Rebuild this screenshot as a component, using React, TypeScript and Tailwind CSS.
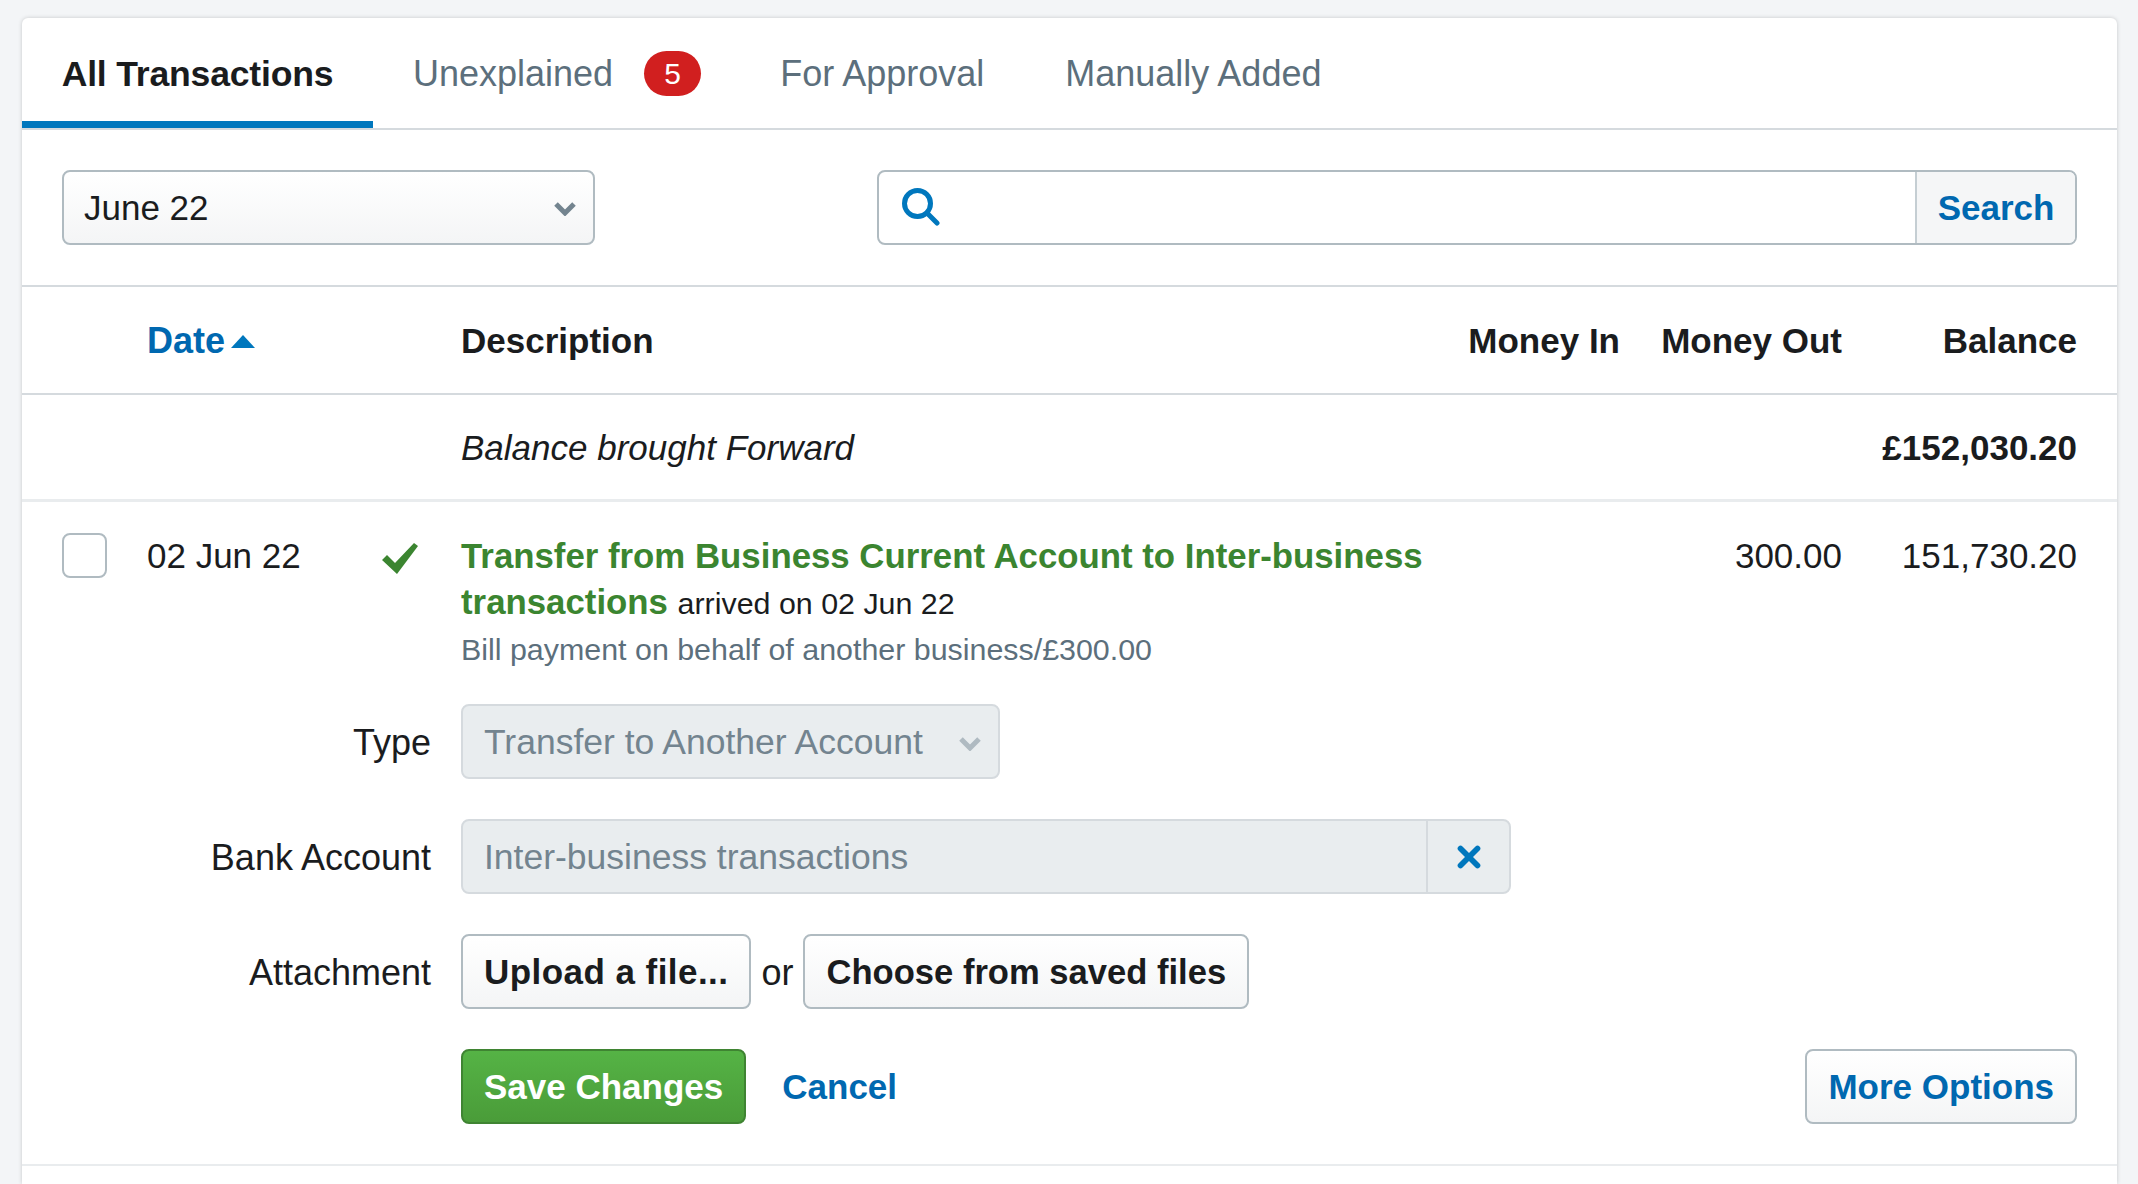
import { X } from 'lucide-react';

const font = { fontFamily: '"Liberation Sans", Arial, sans-serif' };

function Chevron({ className }: { className: string }) {
  return (
    <svg viewBox="0 0 24 16" className={className} aria-hidden>
      <path d="M3 4 L12 13 L21 4" fill="none" stroke="currentColor" strokeWidth="5" />
    </svg>
  );
}

function Tabs() {
  return (
    <div className="flex h-[112px] border-b-2 border-[#d5dade] text-[36px] text-[#5c6f7c]">
      <div className="flex h-[110px] w-[351px] items-center justify-center border-b-[7px] border-[#0077bd] pt-[10px] text-[35.6px] font-bold tracking-[-0.2px] text-[#1a1c1e]">
        All Transactions
      </div>
      <div className="ml-[40px] flex items-center pt-[1px]">
        Unexplained
        <span className="ml-[31px] flex h-[45px] w-[57px] items-center justify-center rounded-[23px] bg-[#d11f1f] text-[30px] text-white">
          5
        </span>
      </div>
      <div className="ml-[79px] flex items-center pt-[1px]">For Approval</div>
      <div className="ml-[81px] flex items-center pt-[1px]">Manually Added</div>
    </div>
  );
}

function Filters() {
  return (
    <div className="flex h-[157px] items-center justify-between border-b-2 border-[#d5dade] px-[40px]">
      <div className="flex h-[75px] w-[533px] items-center justify-between rounded-[8px] border-2 border-[#b0bbc1] bg-gradient-to-b from-white to-[#f4f5f6] pl-[20px] pr-[16px] pt-[1px] text-[35px] text-[#1a1c1e]">
        June 22
        <Chevron className="h-[16px] w-[24px] text-[#73848f]" />
      </div>
      <div className="flex h-[75px] w-[1200px] items-stretch rounded-[8px] border-2 border-[#b0bbc1]">
        <div className="flex flex-1 items-center pb-[1px] pl-[23px]">
          <svg viewBox="0 0 38 38" className="h-[38px] w-[38px] text-[#0077bd]" aria-hidden>
            <circle cx="15.5" cy="15.5" r="13" fill="none" stroke="currentColor" strokeWidth="5" />
            <path d="M25 25 L35 35" fill="none" stroke="currentColor" strokeWidth="5" strokeLinecap="round" />
          </svg>
        </div>
        <div className="flex w-[160px] items-center justify-center rounded-r-[6px] border-l-2 border-[#c5ced3] bg-[#f5f6f7] pt-[1px] text-[35px] font-bold text-[#0068b0]">
          Search
        </div>
      </div>
    </div>
  );
}

function TableHead() {
  return (
    <div className="flex h-[108px] items-center border-b-2 border-[#d5dade] pl-[125px] pr-[40px] pt-[2px] text-[35px] font-bold text-[#1a1c1e]">
      <div className="flex w-[314px] items-center gap-[6px] text-[36px] text-[#0068b0]">
        Date
        <span className="h-0 w-0 border-x-[12px] border-b-[13px] border-x-transparent border-b-[#0077bd]" />
      </div>
      <div className="flex-1">Description</div>
      <div className="w-[200px] text-right">Money In</div>
      <div className="w-[222px] text-right">Money Out</div>
      <div className="w-[235px] text-right">Balance</div>
    </div>
  );
}

function BalanceRow() {
  return (
    <div className="flex h-[107px] items-center justify-between border-b-[3px] border-[#e9ecee] pl-[439px] pr-[40px] pt-[2px] text-[35px] text-[#1a1c1e]">
      <span className="italic">Balance brought Forward</span>
      <span className="font-bold">£152,030.20</span>
    </div>
  );
}

function FormRow({ label, children }: { label: string; children: React.ReactNode }) {
  return (
    <div className="mt-[40px] flex h-[75px] items-center">
      <div className="w-[387px] pt-[2px] text-right text-[36px] text-[#1a1c1e]">{label}</div>
      <div className="ml-[30px] flex items-center">{children}</div>
    </div>
  );
}

const btn =
  'flex h-[75px] items-center rounded-[8px] border-2 border-[#b0bbc1] bg-gradient-to-b from-white to-[#f4f5f6] px-[21px] pt-[2px] font-bold';

function Transaction() {
  return (
    <div className="border-b-2 border-[#e9ecee] pb-[40px] pl-[22px] pr-[40px]">
      <div className="flex items-start pt-[28px]">
        <div className="ml-[18px] mt-[3px] h-[45px] w-[45px] rounded-[8px] border-2 border-[#b0bbc1]" />
        <div className="ml-[40px] w-[235px] pt-[2px] text-[35px] leading-[47px] text-[#1a1c1e]">02 Jun 22</div>
        <div className="w-[79px] pt-[13px]">
          <svg viewBox="0 0 36 31" className="h-[31px] w-[36px] text-[#3b8530]" aria-hidden>
            <path d="M0 17 L5 12 L13 20 L32 0 L36 3 L15 31 Z" fill="currentColor" />
          </svg>
        </div>
        <div className="w-[1000px] pt-[3px]">
          <div className="text-[34.8px] font-bold leading-[46px] text-[#3b8530]">
            Transfer from Business Current Account to Inter-business transactions{' '}
            <span className="text-[30.4px] font-normal text-[#1a1c1e]">arrived on 02 Jun 22</span>
          </div>
          <div className="text-[30.4px] leading-[47px] text-[#5c6f7c]">Bill payment on behalf of another business/£300.00</div>
        </div>
        <div className="flex-1 pt-[2px] text-right text-[35px] leading-[47px] text-[#1a1c1e]">300.00</div>
        <div className="w-[235px] pt-[2px] text-right text-[35px] leading-[47px] text-[#1a1c1e]">151,730.20</div>
      </div>
      <div className="-mt-[9px]">
        <FormRow label="Type">
          <div className="flex h-[75px] w-[539px] items-center justify-between rounded-[8px] border-2 border-[#d5dade] bg-[#e9edef] pl-[21px] pr-[16px] pt-[2px] text-[35.5px] text-[#73848f]">
            Transfer to Another Account
            <Chevron className="h-[16px] w-[24px] text-[#afbac1]" />
          </div>
        </FormRow>
        <FormRow label="Bank Account">
          <div className="flex h-[75px] w-[1050px] items-stretch rounded-[8px] border-2 border-[#d5dade] bg-[#e9edef] text-[35.5px] text-[#73848f]">
            <div className="flex flex-1 items-center pl-[21px] pt-[2px]">Inter-business transactions</div>
            <div className="flex w-[83px] items-center justify-center border-l-2 border-[#d5dade]">
              <X size={34} strokeWidth={4} className="text-[#0077bd]" />
            </div>
          </div>
        </FormRow>
        <FormRow label="Attachment">
          <div className={`${btn} text-[35px] tracking-[0.45px] text-[#1a1c1e]`}>Upload a file...</div>
          <span className="mx-[10px] pt-[2px] text-[36px] text-[#1a1c1e]">or</span>
          <div className={`${btn} text-[34.6px] text-[#1a1c1e]`}>Choose from saved files</div>
        </FormRow>
        <div className="mt-[40px] flex h-[75px] items-center pl-[417px]">
          <div className="flex h-[75px] items-center rounded-[8px] border-2 border-[#3f8432] bg-gradient-to-b from-[#55b345] to-[#4a9c39] px-[21px] pt-[2px] text-[35px] font-bold text-white">
            Save Changes
          </div>
          <span className="ml-[36px] pt-[2px] text-[35px] font-bold text-[#0068b0]">Cancel</span>
          <div className={`${btn} ml-auto text-[35px] text-[#0068b0]`}>More Options</div>
        </div>
      </div>
    </div>
  );
}

export default function App() {
  return (
    <div className="min-h-[1184px] overflow-hidden bg-[#f3f5f7] pl-[22px] pr-[21px] pt-[18px]" style={font}>
      <div className="min-h-[1166px] rounded-t-[6px] bg-white shadow-[0_0_4px_rgba(0,0,0,0.18)]">
        <Tabs />
        <Filters />
        <TableHead />
        <BalanceRow />
        <Transaction />
      </div>
    </div>
  );
}
